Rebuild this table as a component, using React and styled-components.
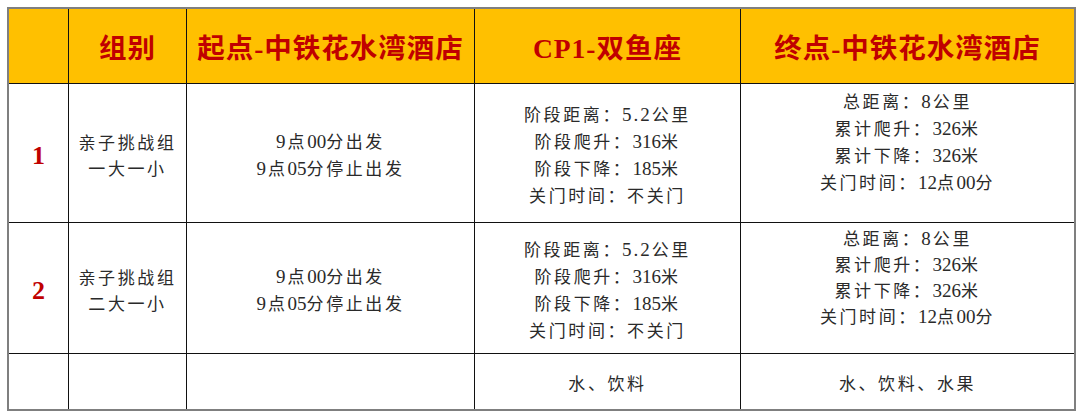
import React from 'react';
import styled, { createGlobalStyle } from 'styled-components';

const GlobalStyle = createGlobalStyle`
  html, body {
    margin: 0;
    padding: 0;
    background: #fff;
  }
`;

const Page = styled.div`
  width: 1080px;
  height: 416px;
  padding: 7px 0 0 7px;
  box-sizing: border-box;
  background: #fff;
`;

const Grid = styled.div`
  display: grid;
  grid-template-columns: 60px 118px 288px 266px 333px;
  grid-template-rows: 75px 139px 131px 55px;
  width: max-content;
  border: 2px solid #7f7f7f;
  box-sizing: content-box;
`;

const Cell = styled.div`
  display: flex;
  flex-direction: column;
  align-items: center;
  justify-content: center;
  box-sizing: border-box;
  padding-top: ${p => (p.$head ? '0' : '3px')};
  border-right: ${p => (p.$last ? 'none' : '1.5px solid #111')};
  border-bottom: ${p => (p.$bottom ? 'none' : '1.5px solid #111')};
  background: ${p => (p.$head ? '#ffc000' : '#fff')};
  text-align: center;
`;

const HeadText = styled.div`
  font-family: 'Liberation Serif', 'Noto Sans CJK SC', serif;
  font-weight: 700;
  font-size: 27.5px;
  color: #c00000;
  letter-spacing: 1px;
`;

const Num = styled.div`
  font-family: 'Liberation Serif', serif;
  font-weight: 700;
  font-size: 26px;
  color: #c00000;
  margin-top: 2px;
`;

const Line = styled.div`
  font-family: 'Noto Sans CJK SC', 'Liberation Serif', sans-serif;
  font-size: 17px;
  line-height: 26px;
  letter-spacing: 2.6px;
  color: #2a2a2a;
  min-height: 26px;
  white-space: nowrap;
`;

const Latin = styled.span`
  font-family: 'Liberation Serif', serif;
  font-size: 19px;
  letter-spacing: ${p => (p.$tight ? '0' : '2px')};
`;

const withLatin = text =>
  text.split(/([0-9.]+)/).map((part, i) =>
    i % 2 === 1 ? <Latin key={i} $tight={part.length > 1 && !part.includes('.')}>{part}</Latin> : part
  );

const HeadLatin = styled.span`
  font-family: 'Liberation Serif', serif;
`;

const headers = ['', '组别', '起点-中铁花水湾酒店', 'CP1-双鱼座', '终点-中铁花水湾酒店'];

const cp1 = ['阶段距离：5.2公里', '阶段爬升：316米', '阶段下降：185米', '关门时间：不关门'];
const finish = ['总距离：8公里', '累计爬升：326米', '累计下降：326米', '关门时间：12点00分', ''];
const start = ['9点00分出发', '9点05分停止出发'];

const rows = [
  { no: '1', group: ['亲子挑战组', '一大一小'] },
  { no: '2', group: ['亲子挑战组', '二大一小'] },
];

const Lines = ({ items }) => items.map((t, i) => <Line key={i}>{withLatin(t)}</Line>);

const headText = h =>
  h.split(/([A-Za-z0-9-]+)/).map((part, i) =>
    i % 2 === 1 ? <HeadLatin key={i}>{part}</HeadLatin> : part
  );

export default function App() {
  return (
    <>
      <GlobalStyle />
      <Page>
        <Grid>
          {headers.map((h, i) => (
            <Cell key={h + i} $head $last={i === 4}>
              <HeadText>{headText(h)}</HeadText>
            </Cell>
          ))}
          {rows.map(r => (
            <React.Fragment key={r.no}>
              <Cell><Num>{r.no}</Num></Cell>
              <Cell><Lines items={r.group} /></Cell>
              <Cell><Lines items={start} /></Cell>
              <Cell><Lines items={cp1} /></Cell>
              <Cell $last><Lines items={finish} /></Cell>
            </React.Fragment>
          ))}
          <Cell $bottom />
          <Cell $bottom />
          <Cell $bottom />
          <Cell $bottom><Line>水、饮料</Line></Cell>
          <Cell $bottom $last><Line>水、饮料、水果</Line></Cell>
        </Grid>
      </Page>
    </>
  );
}
